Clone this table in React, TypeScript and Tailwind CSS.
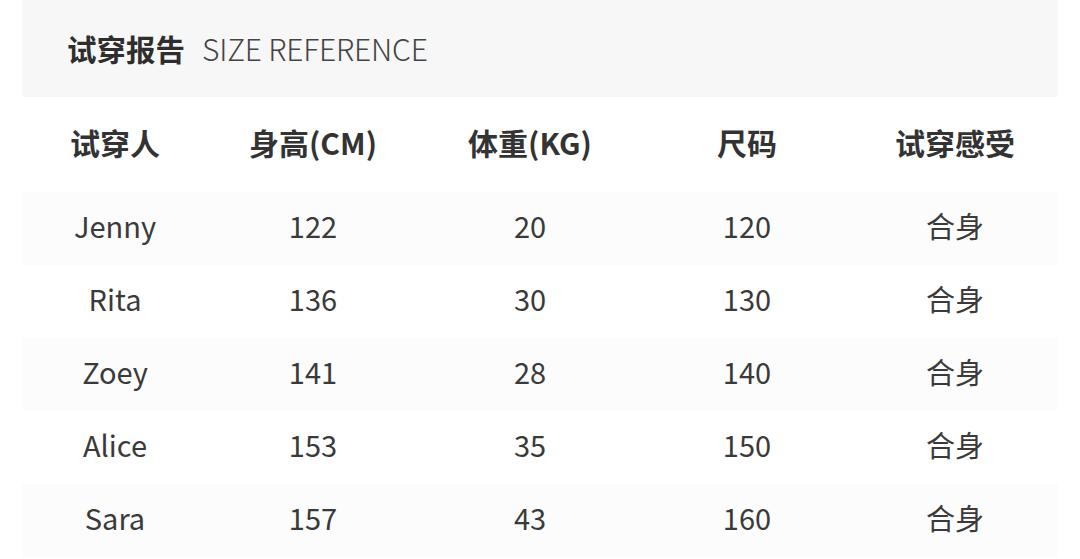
// Size reference table

import React from 'react'

interface Row {
  name: string
  height: string
  weight: string
  size: string
  feel: string
}

const rows: Row[] = [
  { name: 'Jenny', height: '122', weight: '20', size: '120', feel: '合身' },
  { name: 'Rita', height: '136', weight: '30', size: '130', feel: '合身' },
  { name: 'Zoey', height: '141', weight: '28', size: '140', feel: '合身' },
  { name: 'Alice', height: '153', weight: '35', size: '150', feel: '合身' },
  { name: 'Sara', height: '157', weight: '43', size: '160', feel: '合身' },
]

const cols = 'grid grid-cols-[186px_210px_224px_210px_206px]'

export default function App() {
  return (
    <div className="w-[1080px] h-[559px] overflow-hidden bg-white px-[22px] text-[#333] font-['Noto_Sans_CJK_SC','Noto_Sans',sans-serif]">
      {/* Title band */}
      <div className="h-[97px] bg-[#f7f7f7] flex items-center pl-[45px] gap-[17px]">
        <span className="text-[29.5px] font-bold text-[#2e2e2e]">试穿报告</span>
        <span className="text-[30px] font-light tracking-[-0.2px] text-[#444]">SIZE REFERENCE</span>
      </div>

      {/* Table header */}
      <div className={`${cols} h-[95px] pb-[4px] items-center text-[30px] font-bold text-[#333]`}>
        <div className="text-center">试穿人</div>
        <div className="text-center">身高(CM)</div>
        <div className="text-center">体重(KG)</div>
        <div className="text-center">尺码</div>
        <div className="text-center">试穿感受</div>
      </div>

      {/* Rows */}
      {rows.map((r, i) => (
        <div
          key={r.name}
          className={`${cols} h-[73px] pb-[5px] items-center text-[29px] text-[#3a3a3a] ${i % 2 === 0 ? 'bg-[#fcfcfc]' : 'bg-white'}`}
        >
          <div className="text-center">{r.name}</div>
          <div className="text-center">{r.height}</div>
          <div className="text-center">{r.weight}</div>
          <div className="text-center">{r.size}</div>
          <div className="text-center">{r.feel}</div>
        </div>
      ))}
    </div>
  )
}
